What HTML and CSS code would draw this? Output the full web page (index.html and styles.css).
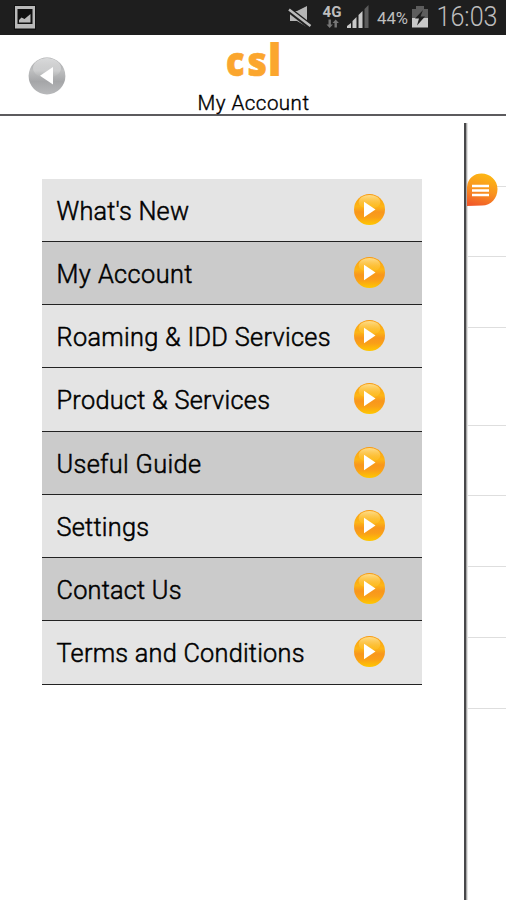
FILE: index.html
```html
<!DOCTYPE html>
<html lang="en">
<head>
<meta charset="utf-8">
<title>My Account</title>
<link rel="stylesheet" href="styles.css">
</head>
<body>
<svg class="defs" width="0" height="0" aria-hidden="true">
  <defs>
    <linearGradient id="orange" x1="0" y1="0" x2="0" y2="1">
      <stop offset="0" stop-color="#f99a10"/><stop offset=".4" stop-color="#fdb515"/><stop offset=".58" stop-color="#f8961d"/><stop offset=".75" stop-color="#fa9f18"/><stop offset="1" stop-color="#ffc800"/>
    </linearGradient>
    <linearGradient id="shine" x1="0" y1="0" x2="0" y2="1">
      <stop offset="0" stop-color="#fff" stop-opacity=".6"/><stop offset="1" stop-color="#fff" stop-opacity="0"/>
    </linearGradient>
    <linearGradient id="gloss" x1="0" y1="0" x2="0" y2="1">
      <stop offset="0" stop-color="#ffe9a0" stop-opacity=".85"/><stop offset="1" stop-color="#ffd040" stop-opacity=".1"/>
    </linearGradient>
    <linearGradient id="grey" x1="0" y1="0" x2="0" y2="1">
      <stop offset="0" stop-color="#a2a3a5"/><stop offset=".35" stop-color="#bebfc0"/><stop offset=".65" stop-color="#a5a6a8"/><stop offset="1" stop-color="#b8b9bb"/>
    </linearGradient>
    <linearGradient id="bubble" x1=".6" y1="0" x2=".3" y2="1">
      <stop offset="0" stop-color="#fdb813"/><stop offset=".5" stop-color="#f99420"/><stop offset="1" stop-color="#f15a29"/>
    </linearGradient>
    <symbol id="play" viewBox="0 0 32 32">
      <circle cx="15.5" cy="15.5" r="15.5" fill="url(#orange)"/>
      <ellipse cx="15.500" cy="8" rx="11" ry="7" fill="url(#gloss)"/>
      <path d="M10 7.800V23.300L21.500 15.500z" fill="#fff"/>
    </symbol>
  </defs>
</svg>
<header class="status">
  <svg class="picture" width="22" height="25" viewBox="0 0 22 25"><path d="M0 0h22v25H0z" fill="#111"/><path fill-rule="evenodd" d="M1 1h20v22.500H1zM3.500 4v15h15V4z" fill="#b9b9b9"/><path d="M5 17.500v-2.500l2.500-2.500 3 1.500 6-5v8.500z" fill="#b9b9b9"/></svg>
  <svg class="indicators" width="226" height="35" viewBox="0 0 226 35">
    <path d="M10 11h7l10-5v21l-10-6h-7z" fill="#b5b5b5"/>
    <path d="M8 9l23 18" stroke="#1e1e1e" stroke-width="6"/><path d="M9 9.500l21.500 16.500" stroke="#bbb" stroke-width="2.500"/>
    <text x="42.500" y="16.500" class="network" textLength="19" lengthAdjust="spacingAndGlyphs">4G</text>
    <path d="M48.500 19.500v5h-2l3.200 3.500 3.200-3.500h-2v-5zM54.500 27.500v-4.500h-2l3.200-3.500 3.200 3.500h-2v4.500z" fill="#777"/>
    <path d="M67 28v-2l4-3v5zM72.500 28v-7l4-4v11zM78.500 28V15l4-4v17z" fill="#c8c8c8"/><path d="M84.500 28V9l4-4v23z" fill="#5c5c5c"/>
    <text x="97" y="24" class="battery" textLength="31" lengthAdjust="spacingAndGlyphs">44%</text>
    <path d="M136 6h8v3h4v9h-16V9h4z" fill="#5d5d5d"/><path d="M132 18h16v9.500h-16z" fill="#c8c8c8"/>
    <path d="M143 10l-8 8.500h4l-2 7 8-9h-4.500z" fill="#1e1e1e"/>
    <text x="156.500" y="26" class="time" textLength="61" lengthAdjust="spacingAndGlyphs">16:03</text>
  </svg>
</header>
<section class="title">
  <svg class="back" width="38" height="38" viewBox="0 0 38 38"><circle cx="19" cy="19" r="18.400" fill="url(#grey)"/><ellipse cx="19" cy="11" rx="14" ry="10" fill="url(#shine)"/><path d="M25 10v17.500L12 18.700z" fill="#fff"/></svg>
  <div class="heading">
    <svg class="logo" width="60" height="55" viewBox="0 0 60 55"><text x="0" y="41" textLength="18.500" lengthAdjust="spacingAndGlyphs">c</text><text x="21.500" y="41" textLength="19.500" lengthAdjust="spacingAndGlyphs">s</text><text class="tall-letter" x="41.500" y="41">l</text></svg>
    <svg class="name" width="116" height="26" viewBox="0 0 116 26"><text x="2.500" y="20.500" textLength="111.500">My Account</text></svg>
  </div>
</section>
<main class="content">
  <nav class="menu">
    <a class="item"><svg class="label" height="40" width="290"><text x="0.500" y="29.500" textLength="132.500">What's New</text></svg><svg class="go"><use href="#play"/></svg></a>
    <a class="item dark"><svg class="label" height="40" width="290"><text x="0.500" y="29.500" textLength="136">My Account</text></svg><svg class="go"><use href="#play"/></svg></a>
    <a class="item"><svg class="label" height="40" width="290"><text x="0.500" y="29.500" textLength="274">Roaming &amp; IDD Services</text></svg><svg class="go"><use href="#play"/></svg></a>
    <a class="item"><svg class="label" height="40" width="290"><text x="0.500" y="29.500" textLength="213.500">Product &amp; Services</text></svg><svg class="go"><use href="#play"/></svg></a>
    <a class="item dark"><svg class="label" height="40" width="290"><text x="0.500" y="29.500" textLength="144.500">Useful Guide</text></svg><svg class="go"><use href="#play"/></svg></a>
    <a class="item"><svg class="label" height="40" width="290"><text x="0.500" y="29.500" textLength="92.500">Settings</text></svg><svg class="go"><use href="#play"/></svg></a>
    <a class="item dark"><svg class="label" height="40" width="290"><text x="0.500" y="29.500" textLength="125">Contact Us</text></svg><svg class="go"><use href="#play"/></svg></a>
    <a class="item"><svg class="label" height="40" width="290"><text x="0.500" y="29.500" textLength="248">Terms and Conditions</text></svg><svg class="go"><use href="#play"/></svg></a>
  </nav>
  <aside class="page">
    <div class="line first"></div><div class="line"></div><div class="line"></div><div class="line tall"></div><div class="line"></div><div class="line"></div><div class="line"></div><div class="line"></div>
    <svg class="handle" width="31" height="33" viewBox="0 0 31 33"><path d="M0 33V14C1 5 7 .5 14.500 .5C23 .5 30.500 7 30.500 16C30.500 25 24 32.500 15 32.500z" fill="url(#bubble)"/><path d="M5 13h17M5 17.500h17M5 22h17" stroke="#fff" stroke-width="2.600"/></svg>
  </aside>
</main>
</body>
</html>
```
FILE: styles.css
```css
* { box-sizing: border-box; }
body { margin: 0; width: 506px; height: 900px; overflow: hidden; background: #fff; font-family: Roboto, "Liberation Sans", sans-serif; color: #000; }
svg { display: block; flex: none; }
.defs { position: absolute; }
.status { height: 35px; background: #1e1e1e; display: flex; justify-content: space-between; align-items: flex-start; }
.picture { margin: 5px 0 0 14px; }
.status text { fill: #bebebe; }
.network { font-size: 15px; font-weight: 700; }
.battery { font-size: 17px; }
.time { font-size: 27px; font-weight: 300; }
.title { height: 81px; border-bottom: 2px solid #5c5b5e; display: grid; grid-template-columns: 195px 116px 1fr; }
.back { margin: 21.5px 0 0 28px; }
.heading { padding-top: 0; }
.logo { margin-left: 31px; overflow: visible; }
.logo text { font: 800 40px/1 "Open Sans", sans-serif; fill: #fba62e; stroke: #fba62e; stroke-width: .7; }
.logo .tall-letter { font-size: 44.5px; stroke-width: 0; }
.name { margin-top: -1px; }
.name text { font-size: 20.5px; font-weight: 300; stroke: #000; stroke-width: .4; }
.content { display: flex; height: 784px; }
.menu { width: 379.5px; margin: 62.5px 42.5px 0 42px; }
.item { display: flex; height: 63.25px; padding: 11px 36px 0 14px; justify-content: space-between; background: #e4e4e4; border-bottom: 1.5px solid #222; }
.dark { background: #cbcbcb; }
.label { width: 290px; }
.label text { font-size: 25.3px; font-weight: 300; stroke: #000; stroke-width: .5; }
.go { width: 32px; height: 32px; margin-top: 4px; }
.page { position: relative; flex: 1; margin-top: 7px; border-left: 2px solid #48484a; box-shadow: inset 1px 0 #aaa, inset 2px 0 #e2e2e2; padding-left: 2px; }
.line { height: 70.8px; border-bottom: 1px solid #dedede; }
.first { height: 63.5px; }
.tall { height: 97.5px; }
.handle { position: absolute; left: 1px; top: 50px; }
```
